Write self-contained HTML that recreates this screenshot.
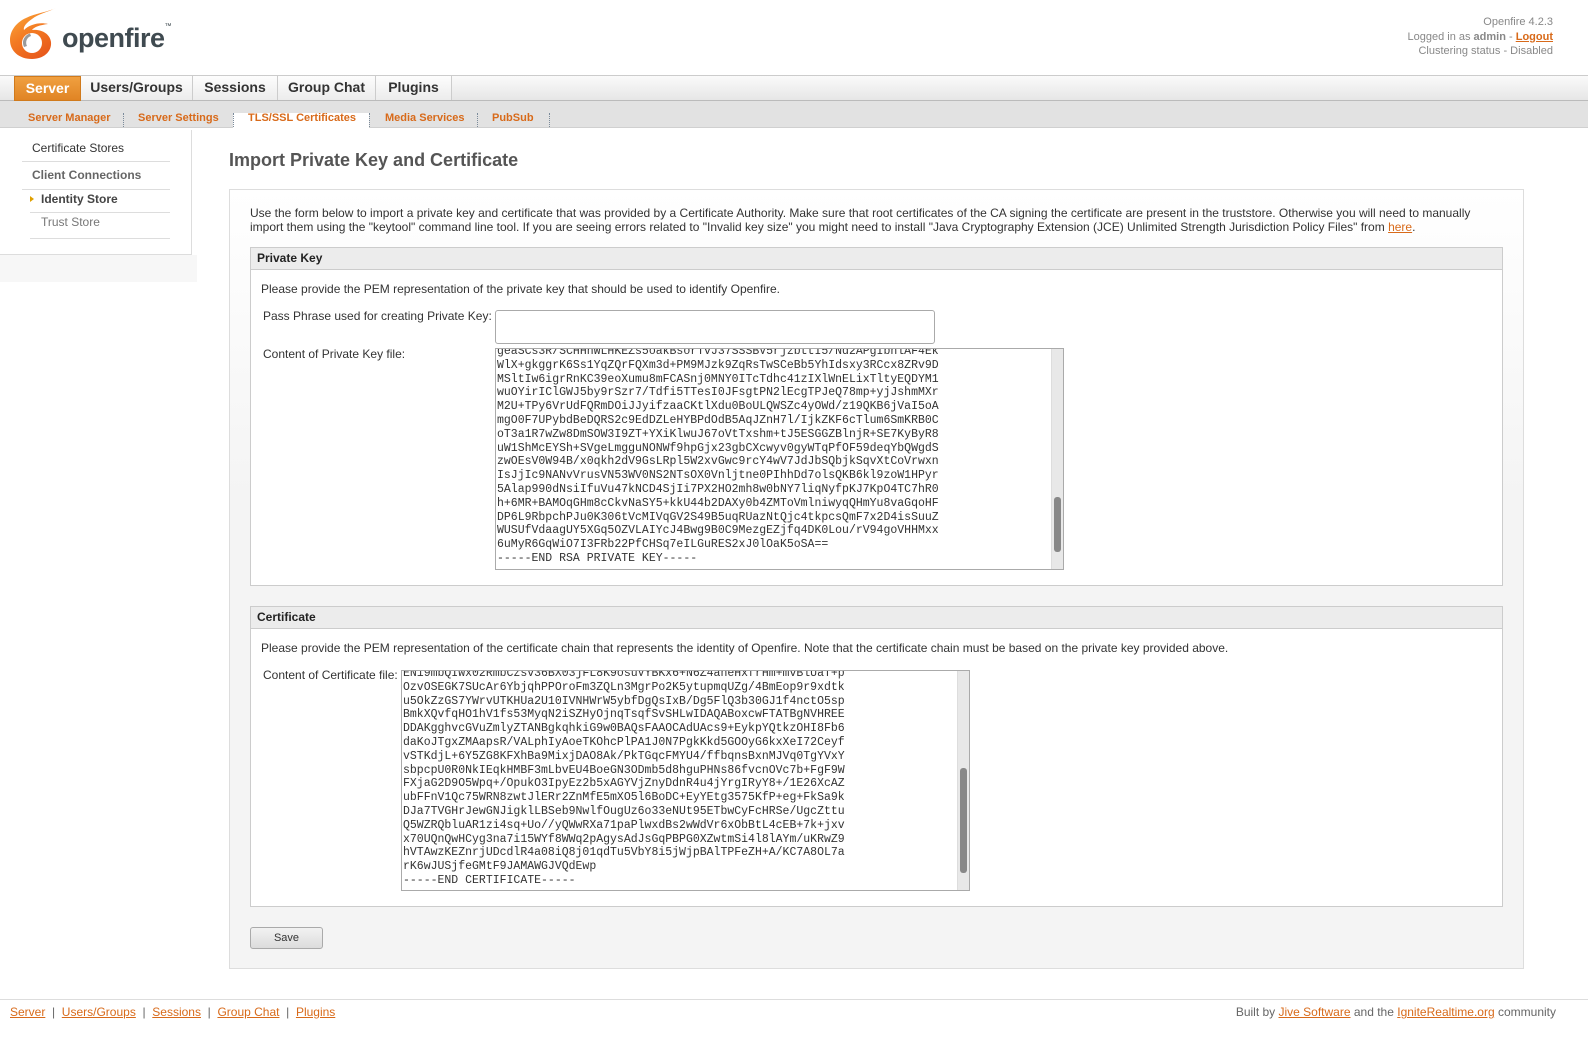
<!DOCTYPE html>
<html><head><meta charset="utf-8"><style>
*{margin:0;padding:0;box-sizing:border-box}
body{width:1588px;height:1058px;position:relative;background:#fff;font-family:"Liberation Sans",sans-serif;font-size:12px;color:#333;overflow:hidden}
.abs{position:absolute}
a{color:#d86a1a;text-decoration:underline}
.hdr{right:35px;top:15px;text-align:right;color:#888;font-size:11px;line-height:14.5px}
.nav{left:0;top:75px;width:1588px;height:26px;background:linear-gradient(#fafafa,#e6e6e6);border-top:1px solid #ccc;border-bottom:1px solid #bbb}
.tab{position:absolute;top:1px;height:24px;line-height:23px;font-size:14px;font-weight:bold;color:#333;text-align:center;border-right:1px solid #ccc;background:linear-gradient(#fdfdfd,#ececec)}
.sub{left:0;top:101px;width:1588px;height:27px;background:#e2e2e2;border-bottom:1px solid #d0d0d0}
.st{position:absolute;top:112px;font-size:11px;font-weight:bold;color:#d86a1a}
.sep{position:absolute;top:113px;width:0;height:14px;border-left:1px dotted #7a8a9a}
.side{left:0;top:130px;width:192px;height:125px;background:#fff;border-right:1px solid #ddd;border-bottom:1px solid #ddd}
.sidebg{left:0;top:255px;width:197px;height:27px;background:#f7f7f7}
.si{position:absolute;left:22px;width:148px;border-bottom:1px solid #ddd;font-size:12px}
.box{left:229px;top:189px;width:1295px;height:780px;border:1px solid #ddd;background:linear-gradient(#fff,#f4f4f4 40%,#f4f4f4)}
.panel{position:absolute;left:250px;width:1253px;border:1px solid #ccc;background:#fff}
.ph{height:22px;background:#ececec;border-bottom:1px solid #ccc;font-weight:bold;font-size:12px;line-height:21px;padding-left:6px;color:#222}
.ta{position:absolute;border:1px solid #aaa;background:#fff;overflow:hidden;font-family:"Liberation Mono",monospace;font-size:11.5px;line-height:13.8px;color:#333;white-space:pre}
.sb{position:absolute;top:0;right:0;width:12px;bottom:0;background:#e8e8e8;border-left:1px solid #ddd}
.thumb{position:absolute;left:2px;width:7px;background:#888;border-radius:3px}
.foot{left:0;top:999px;width:1588px;border-top:1px solid #ddd}
</style></head><body>
<svg class="abs" style="left:8px;top:6px" width="50" height="54" viewBox="0 0 50 54">
<defs><linearGradient id="g" x1="0" y1="0" x2="0.6" y2="1"><stop offset="0" stop-color="#fbb040"/><stop offset=".55" stop-color="#f37a22"/><stop offset="1" stop-color="#e85a1c"/></linearGradient></defs>
<path d="M48 2C40 6 30 8 24 13C18 17 15 21 16 24C22 18 32 16 40 18C32 19 26 21 24 24C34 23 42 28 43 36C44 46 35 53 24 53C11 53 2 45 2 34C2 24 9 16 18 12C28 7 40 6 48 2Z" fill="url(#g)"/>
<circle cx="24" cy="37" r="10" fill="#fff"/>
<path d="M16 41A9.5 9.5 0 0 1 22 27.5L23 30A7 7 0 0 0 19 40Z" fill="#9a9a9a"/>
</svg>
<div class="abs" style="left:62px;top:23px;font-size:27px;font-weight:bold;color:#3f4a50;letter-spacing:-0.5px">openfire<span style="font-size:7px;vertical-align:top;font-weight:normal">™</span></div>
<div class="abs hdr">Openfire 4.2.3<br>Logged in as <b>admin</b> - <a style="font-weight:bold">Logout</a><br>Clustering status - Disabled</div>

<div class="abs nav"></div>
<div class="abs" style="left:14px;top:76px;width:67px;height:25px;border:1px solid #d07a1c;background:linear-gradient(#f0a040,#e08424);color:#fff;font-weight:bold;font-size:14px;line-height:23px;text-align:center">Server</div>
<div class="tab" style="left:81px;top:76px;width:112px">Users/Groups</div>
<div class="tab" style="left:193px;top:76px;width:85px">Sessions</div>
<div class="tab" style="left:278px;top:76px;width:98px">Group Chat</div>
<div class="tab" style="left:376px;top:76px;width:76px">Plugins</div>

<div class="abs sub"></div>
<div class="abs" style="left:233px;top:113px;width:136px;height:16px;background:#fff"></div>
<div class="st" style="left:28px">Server Manager</div><div class="sep" style="left:123px"></div>
<div class="st" style="left:138px">Server Settings</div><div class="sep" style="left:233px"></div>
<div class="st" style="left:248px">TLS/SSL Certificates</div><div class="sep" style="left:369px"></div>
<div class="st" style="left:385px">Media Services</div><div class="sep" style="left:477px"></div>
<div class="st" style="left:492px">PubSub</div><div class="sep" style="left:549px"></div>

<div class="abs side"></div>
<div class="abs sidebg"></div>
<div class="si" style="top:141px;height:21px;padding-left:10px;color:#333">Certificate Stores</div>
<div class="si" style="top:168px;height:22px;padding-left:10px;color:#666;font-weight:bold">Client Connections</div>
<div class="si" style="top:192px;height:21px;left:30px;width:140px;padding-left:11px;font-weight:bold;color:#444"><span style="position:absolute;left:0;top:4px;border-left:4px solid #e0a000;border-top:3px solid transparent;border-bottom:3px solid transparent"></span>Identity Store</div>
<div class="si" style="top:215px;height:24px;left:30px;width:140px;padding-left:11px;color:#777">Trust Store</div>

<div class="abs" style="left:229px;top:150px;font-size:18px;font-weight:bold;color:#555">Import Private Key and Certificate</div>
<div class="abs box"></div>
<div class="abs" style="left:250px;top:206px;width:1240px;font-size:12px;line-height:14px;color:#333">Use the form below to import a private key and certificate that was provided by a Certificate Authority. Make sure that root certificates of the CA signing the certificate are present in the truststore. Otherwise you will need to manually import them using the "keytool" command line tool. If you are seeing errors related to "Invalid key size" you might need to install "Java Cryptography Extension (JCE) Unlimited Strength Jurisdiction Policy Files" from <a>here</a>.</div>

<div class="panel" style="top:247px;height:339px"><div class="ph">Private Key</div></div>
<div class="abs" style="left:261px;top:282px">Please provide the PEM representation of the private key that should be used to identify Openfire.</div>
<div class="abs" style="left:263px;top:309px">Pass Phrase used for creating Private Key:</div>
<div class="abs" style="left:495px;top:310px;width:440px;height:34px;border:1px solid #aaa;border-radius:3px;background:#fff"></div>
<div class="abs" style="left:263px;top:347px">Content of Private Key file:</div>
<div class="ta" style="left:495px;top:348px;width:569px;height:222px"><div style="margin-top:-4px;margin-left:1px">geaSCs3R/SCHHhWLHKEZs5oakBsorTvJ37SSSBV5rjzbttI5/Nd2APgIbhlAF4Ek
WlX+gkggrK6Ss1YqZQrFQXm3d+PM9MJzk9ZqRsTwSCeBb5YhIdsxy3RCcx8ZRv9D
MSltIw6igrRnKC39eoXumu8mFCASnj0MNY0ITcTdhc41zIXlWnELixTltyEQDYM1
wuOYirIClGWJ5by9rSzr7/Tdfi5TTesI0JFsgtPN2lEcgTPJeQ78mp+yjJshmMXr
M2U+TPy6VrUdFQRmDOiJJyifzaaCKtlXdu0BoULQWSZc4yOWd/z19QKB6jVaI5oA
mgO0F7UPybdBeDQRS2c9EdDZLeHYBPdOdB5AqJZnH7l/IjkZKF6cTlum6SmKRB0C
oT3a1R7wZw8DmSOW3I9ZT+YXiKlwuJ67oVtTxshm+tJ5ESGGZBlnjR+SE7KyByR8
uW1ShMcEYSh+SVgeLmgguNONWf9hpGjx23gbCXcwyv0gyWTqPfOF59deqYbQWgdS
zwOEsV0W94B/x0qkh2dV9GsLRpl5W2xvGwc9rcY4wV7JdJbSQbjkSqvXtCoVrwxn
IsJjIc9NANvVrusVN53WV0NS2NTsOX0Vnljtne0PIhhDd7olsQKB6kl9zoW1HPyr
5Alap990dNsiIfuVu47kNCD4SjIi7PX2HO2mh8w0bNY7liqNyfpKJ7KpO4TC7hR0
h+6MR+BAMOqGHm8cCkvNaSY5+kkU44b2DAXy0b4ZMToVmlniwyqQHmYu8vaGqoHF
DP6L9RbpchPJu0K306tVcMIVqGV2S49B5uqRUazNtQjc4tkpcsQmF7x2D4isSuuZ
WUSUfVdaagUY5XGq5OZVLAIYcJ4Bwg9B0C9MezgEZjfq4DK0Lou/rV94goVHHMxx
6uMyR6GqWiO7I3FRb22PfCHSq7eILGuRES2xJ0lOaK5oSA==
-----END RSA PRIVATE KEY-----</div><div class="sb"><div class="thumb" style="top:148px;height:55px"></div></div></div>

<div class="panel" style="top:606px;height:301px"><div class="ph">Certificate</div></div>
<div class="abs" style="left:261px;top:641px">Please provide the PEM representation of the certificate chain that represents the identity of Openfire. Note that the certificate chain must be based on the private key provided above.</div>
<div class="abs" style="left:263px;top:668px">Content of Certificate file:</div>
<div class="ta" style="left:401px;top:670px;width:569px;height:221px"><div style="margin-top:-4px;margin-left:1px">EN19mbQIwx02RmbCzsv36BX03jFL8K9osuVYBKx6+N6Z4aneHxfrHm+mvBlUaT+p
OzvOSEGK7SUcAr6YbjqhPPOroFm3ZQLn3MgrPo2K5ytupmqUZg/4BmEop9r9xdtk
u5OkZzGS7YWrvUTKHUa2U10IVNHWrW5ybfDgQsIxB/Dg5FlQ3b30GJ1f4nctO5sp
BmkXQvfqHO1hV1fs53MyqN2iSZHyOjnqTsqfSvSHLwIDAQABoxcwFTATBgNVHREE
DDAKgghvcGVuZmlyZTANBgkqhkiG9w0BAQsFAAOCAdUAcs9+EykpYQtkzOHI8Fb6
daKoJTgxZMAapsR/VALphIyAoeTKOhcPlPA1J0N7PgkKkd5GOOyG6kxXeI72Ceyf
vSTKdjL+6Y5ZG8KFXhBa9MixjDAO8Ak/PkTGqcFMYU4/ffbqnsBxnMJVq0TgYVxY
sbpcpU0R0NkIEqkHMBF3mLbvEU4BoeGN3ODmb5d8hguPHNs86fvcnOVc7b+FgF9W
FXjaG2D9O5Wpq+/OpukO3IpyEz2b5xAGYVjZnyDdnR4u4jYrgIRyY8+/1E26XcAZ
ubFFnV1Qc75WRN8zwtJlERr2ZnMfE5mXO5l6BoDC+EyYEtg3575KfP+eg+FkSa9k
DJa7TVGHrJewGNJigklLBSeb9NwlfOugUz6o33eNUt95ETbwCyFcHRSe/UgcZttu
Q5WZRQbluAR1zi4sq+Uo//yQWwRXa71paPlwxdBs2wWdVr6xObBtL4cEB+7k+jxv
x70UQnQwHCyg3na7i15WYf8WWq2pAgysAdJsGqPBPG0XZwtmSi4l8lAYm/uKRwZ9
hVTAwzKEZnrjUDcdlR4a08iQ8j01qdTu5VbY8i5jWjpBAlTPFeZH+A/KC7A8OL7a
rK6wJUSjfeGMtF9JAMAWGJVQdEwp
-----END CERTIFICATE-----</div><div class="sb"><div class="thumb" style="top:97px;height:105px"></div></div></div>

<div class="abs" style="left:250px;top:927px;width:73px;height:22px;border:1px solid #aaa;border-radius:3px;background:linear-gradient(#f2f2f2,#dcdcdc);text-align:center;line-height:20px;font-size:11px;color:#333">Save</div>

<div class="abs foot"></div>
<div class="abs" style="left:10px;top:1005px;color:#666"><a>Server</a> &nbsp;| &nbsp;<a>Users/Groups</a> &nbsp;| &nbsp;<a>Sessions</a> &nbsp;| &nbsp;<a>Group Chat</a> &nbsp;| &nbsp;<a>Plugins</a></div>
<div class="abs" style="right:32px;top:1005px;color:#666">Built by <a>Jive Software</a> and the <a>IgniteRealtime.org</a> community</div>
</body></html>
